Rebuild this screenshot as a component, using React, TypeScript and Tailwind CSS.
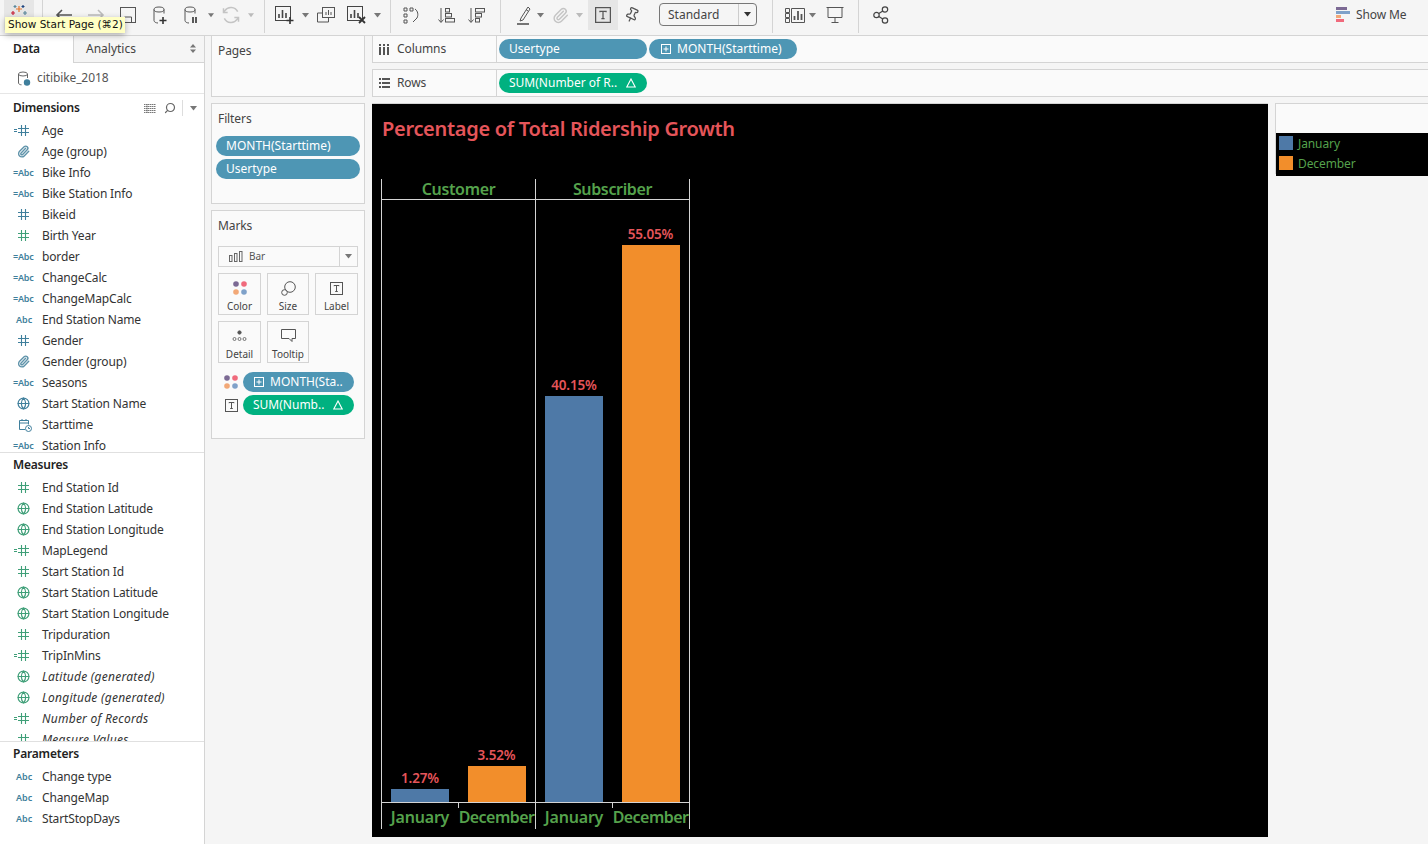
import React from "react";
import { Paperclip, Globe, Search, Pin } from "lucide-react";

const Caret = ({ c = "#777" }: { c?: string }) => (
  <svg width="7" height="5" viewBox="0 0 7 5"><path d="M0 0h7L3.5 4.5z" fill={c} /></svg>
);

const Cyl = () => (
  <g stroke="#555" fill="none" strokeWidth="1">
    <ellipse cx="7" cy="3.5" rx="5" ry="2.5" />
    <path d="M2 3.5v11c0 1.5 2 2.5 4 2.5M12 3.5v4" />
  </g>
);

const Tb = ({ w, children, end, active }: { w: number; children?: React.ReactNode; end?: boolean; active?: boolean }) => (
  <div className={`flex h-[30px] shrink-0 items-center ${end ? "justify-end" : "justify-center"} ${active ? "bg-[#e6e6e6]" : ""}`} style={{ width: w }}>
    {children}
  </div>
);

const Sep = () => <div className="h-[33px] w-px shrink-0 bg-[#d4d4d4]" />;

const Hash = ({ c }: { c: string }) => (
  <svg width="11" height="11" viewBox="0 0 11 11" stroke={c} strokeWidth="1.1" fill="none">
    <path d="M3.5 0v11M7.5 0v11M0 3.5h11M0 7.5h11" />
  </svg>
);

const TypeIcon = ({ t, c }: { t: string; c: string }) => {
  let el: React.ReactNode = null;
  if (t === "#") el = <div className="pl-[18px]"><Hash c={c} /></div>;
  if (t === "=#")
    el = (
      <div className="flex items-center pl-[14px]">
        <span className="mr-px h-[3px] w-[3px] border-y" style={{ borderColor: c }} />
        <Hash c={c} />
      </div>
    );
  if (t === "Abc") el = <span className="pl-4 text-[9px] font-semibold" style={{ color: c }}>Abc</span>;
  if (t === "=Abc") el = <span className="pl-[13px] text-[9px] font-semibold tracking-[-0.2px]" style={{ color: c }}>=Abc</span>;
  if (t === "clip") el = <div className="pl-[17px]"><Paperclip size={13} color="#5f93aa" strokeWidth={2.6} /></div>;
  if (t === "globe") el = <div className="pl-[17px]"><Globe size={13} color={c} strokeWidth={2.2} /></div>;
  if (t === "cal")
    el = (
      <div className="pl-[18px]">
        <svg width="14" height="14" viewBox="0 0 14 14" fill="none" stroke={c} strokeWidth="1">
          <path d="M7 11.5H1.500v-9h9v4M1.500 5h9M4 1v2M8 1v2" />
          <circle cx="10.500" cy="10.500" r="3" fill="#fff" />
          <path d="M10.500 9v1.500h1.500" />
        </svg>
      </div>
    );
  return <div className="flex w-[42px] shrink-0 items-center">{el}</div>;
};

type Row = [string, string, string, boolean?];
const B = "#3f7f9c";
const G = "#3f9f78";

const dims: Row[] = [
  ["=#", B, "Age"], ["clip", B, "Age (group)"], ["=Abc", B, "Bike Info"], ["=Abc", B, "Bike Station Info"],
  ["#", B, "Bikeid"], ["#", G, "Birth Year"], ["=Abc", B, "border"], ["=Abc", B, "ChangeCalc"],
  ["=Abc", B, "ChangeMapCalc"], ["Abc", B, "End Station Name"], ["#", B, "Gender"], ["clip", B, "Gender (group)"],
  ["=Abc", B, "Seasons"], ["globe", B, "Start Station Name"], ["cal", B, "Starttime"], ["=Abc", B, "Station Info"],
];
const meas: Row[] = [
  ["#", G, "End Station Id"], ["globe", G, "End Station Latitude"], ["globe", G, "End Station Longitude"], ["=#", G, "MapLegend"],
  ["#", G, "Start Station Id"], ["globe", G, "Start Station Latitude"], ["globe", G, "Start Station Longitude"], ["#", G, "Tripduration"],
  ["=#", G, "TripInMins"], ["globe", G, "Latitude (generated)", true], ["globe", G, "Longitude (generated)", true],
  ["=#", G, "Number of Records", true], ["#", G, "Measure Values", true],
];
const params: Row[] = [["Abc", B, "Change type"], ["Abc", B, "ChangeMap"], ["Abc", B, "StartStopDays"]];

const FieldRow = ({ r }: { r: Row }) => (
  <div className="flex h-[21px] shrink-0 items-center">
    <TypeIcon t={r[0]} c={r[1]} />
    <span className={`whitespace-nowrap text-[12px] text-[#333] ${r[3] ? "italic tracking-[0.25px]" : "tracking-[-0.15px]"}`}>{r[2]}</span>
  </div>
);

const Pill = ({ label, green, w, plus, delta, pad = "pl-[10px]" }: { label: string; green?: boolean; w: number; plus?: boolean; delta?: boolean; pad?: string }) => (
  <div
    className={`flex h-5 shrink-0 items-center rounded-full text-[12px] text-white ${pad} ${green ? "bg-[#00b180]" : "bg-[#4e96b4]"}`}
    style={{ width: w }}
  >
    {plus ? (
      <svg width="10" height="10" viewBox="0 0 10 10" fill="none" stroke="#fff" strokeWidth="1" className="mr-[6px] shrink-0">
        <rect x="0.5" y="0.5" width="9" height="9" />
        <path d="M5 2.500v5M2.500 5h5" />
      </svg>
    ) : null}
    <span className="whitespace-nowrap">{label}</span>
    {delta ? (
      <svg width="10" height="10" viewBox="0 0 10 10" fill="none" stroke="#fff" strokeWidth="1.1" className="ml-auto mr-[11px] shrink-0">
        <path d="M5 1 9.200 9H.8z" />
      </svg>
    ) : null}
  </div>
);

const MarkCard = ({ label, children }: { label: string; children: React.ReactNode }) => (
  <div className="flex h-[42px] flex-col items-center border border-[#d4d4d4] pt-[5px]">
    <div className="flex h-[18px] items-center">{children}</div>
    <span className="mt-[2px] text-[10px] leading-[14px] text-[#444]">{label}</span>
  </div>
);

const Dots = () => (
  <svg width="14" height="14" viewBox="0 0 14 14" className="shrink-0">
    <circle cx="3" cy="3" r="2.800" fill="#7c6a94" />
    <circle cx="11" cy="3" r="2.800" fill="#f06a7c" />
    <circle cx="3" cy="11" r="2.800" fill="#f2a877" />
    <circle cx="11" cy="11" r="2.800" fill="#7fa1c9" />
  </svg>
);

const TBox = ({ size = 13 }: { size?: number }) => (
  <svg width={size} height={size} viewBox="0 0 13 13" fill="none" stroke="#555" strokeWidth="1">
    <rect x="0.5" y="0.5" width="12" height="12" />
    <path d="M4 4.200V3.500h5v.7M6.500 3.500v6M5.200 9.500h2.600" />
  </svg>
);

const BAR_SCALE = 557 / 55.05;
const panes = [
  { name: "Customer", jan: 1.27, dec: 3.52 },
  { name: "Subscriber", jan: 40.15, dec: 55.05 },
];

const Bar = ({ v, color, w }: { v: number; color: string; w: number }) => (
  <div className="flex flex-col items-center justify-end" style={{ width: w }}>
    <span className="mb-[2px] whitespace-nowrap text-[13.5px] font-semibold leading-[18px] tracking-[-0.15px] text-[#e5555a]">{v.toFixed(2)}%</span>
    <div className="w-[58px]" style={{ height: Math.round(v * BAR_SCALE), backgroundColor: color }} />
  </div>
);

export default function App() {
  return (
    <div className="relative flex h-[844px] w-[1428px] flex-col overflow-hidden bg-[#f5f5f5] font-['Noto_Sans',sans-serif] text-[#333]">
      {/* toolbar */}
      <div className="flex h-[36px] shrink-0 items-start border-b border-[#d4d4d4]">
        <div className="ml-[4px] flex h-[30px] w-[30px] shrink-0 items-start justify-center bg-[#e6e6e6] pt-[4px]">
          <svg width="18" height="18" viewBox="0 0 18 18" strokeWidth="1.2" fill="none">
            <path d="M9 2v6M6 5h6" stroke="#e8762d" />
            <path d="M3 7v4M1 9h4" stroke="#c72037" />
            <path d="M15 7v4M13 9h4" stroke="#5b879b" />
            <path d="M5 1v3M3.500 2.500h3" stroke="#59879b" />
            <path d="M13 1v3M11.500 2.500h3" stroke="#1f447e" />
          </svg>
        </div>
        <div className="w-[8px] shrink-0" />
        <Sep />
        <Tb w={42}>
          <svg width="18" height="14" viewBox="0 0 18 14" fill="none" stroke="#555" strokeWidth="1.6"><path d="M17 7H2M7 2 2 7l5 5" /></svg>
        </Tb>
        <Tb w={22}>
          <svg width="18" height="14" viewBox="0 0 18 14" fill="none" stroke="#bbb" strokeWidth="1.6"><path d="M1 7h15M11 2l5 5-5 5" /></svg>
        </Tb>
        <Tb w={42}>
          <svg width="16" height="16" viewBox="0 0 16 16" fill="none" stroke="#555" strokeWidth="1"><rect x="0.5" y="0.5" width="15" height="15" /><path d="M4.500 15v-5h7v5" /></svg>
        </Tb>
        <Tb w={23}>
          <svg width="17" height="19" viewBox="0 0 17 19"><Cyl /><path d="M11 11v7M7.500 14.500h7" stroke="#333" strokeWidth="1.6" /></svg>
        </Tb>
        <Tb w={36}>
          <svg width="15" height="19" viewBox="0 0 15 19"><Cyl /><path d="M10 11v6M13 11v6" stroke="#333" strokeWidth="1.6" /></svg>
        </Tb>
        <Tb w={6}><Caret /></Tb>
        <Tb w={34}>
          <svg width="20" height="20" viewBox="0 0 24 24" fill="none" stroke="#c4c4c4" strokeWidth="1.800"><path d="M20 8a9 9 0 0 0-15.500-1L3 9M4 16a9 9 0 0 0 15.500 1L21 15M3 4v5h5M21 20v-5h-5" /></svg>
        </Tb>
        <Tb w={6}><Caret c="#bbb" /></Tb>
        <div className="w-[10px] shrink-0" />
        <Sep />
        <Tb w={30} end>
          <svg width="20" height="18" viewBox="0 0 20 18" fill="none" stroke="#444" strokeWidth="1"><rect x="0.5" y="0.5" width="15" height="14" /><path d="M4 12V8M7.500 12V4M11 12V7" strokeWidth="1.600" /><path d="M15 11v7M11.500 14.500h7" stroke="#333" strokeWidth="1.600" /></svg>
        </Tb>
        <Tb w={20}><Caret /></Tb>
        <Tb w={22}>
          <svg width="18" height="16" viewBox="0 0 18 16" fill="none" stroke="#555" strokeWidth="1"><rect x="5.500" y="0.5" width="12" height="10" /><path d="M5 6H.5v9h11v-4M9 8V5M11.500 8V3M14 8V5" /></svg>
        </Tb>
        <Tb w={30} end>
          <svg width="20" height="18" viewBox="0 0 20 18" fill="none" stroke="#444" strokeWidth="1"><rect x="0.5" y="0.5" width="15" height="14" /><path d="M4 12V8M7.500 12V4M11 12V7" strokeWidth="1.600" /><path d="m12 11 6 6M18 11l-6 6" stroke="#333" strokeWidth="1.800" /></svg>
        </Tb>
        <Tb w={20}><Caret /></Tb>
        <div className="w-[3px] shrink-0" />
        <Sep />
        <Tb w={40}>
          <svg width="17" height="17" viewBox="0 0 17 17" fill="none" stroke="#555" strokeWidth="1"><path d="M1 1h3v3H1zM7 1h3v3H7zM1 7h3v3H1zM1 13h3v3H1z" /><path d="M12 2c3 2 3.500 6 2 9l-4 4" /></svg>
        </Tb>
        <Tb w={30}>
          <svg width="17" height="17" viewBox="0 0 17 17" fill="none" stroke="#555" strokeWidth="1"><path d="M3 1v14M.5 12.500 3 15.500l2.500-3" /><rect x="7.500" y="1.500" width="4" height="3.500" /><rect x="7.500" y="6.500" width="6" height="3.500" /><rect x="7.500" y="11.500" width="9" height="3.500" /></svg>
        </Tb>
        <Tb w={30}>
          <svg width="17" height="17" viewBox="0 0 17 17" fill="none" stroke="#555" strokeWidth="1"><path d="M3 1v14M.5 12.500 3 15.500l2.500-3" /><rect x="7.500" y="1.500" width="9" height="3.500" /><rect x="7.500" y="6.500" width="6" height="3.500" /><rect x="7.500" y="11.500" width="4" height="3.500" /></svg>
        </Tb>
        <div className="w-[9px] shrink-0" />
        <Sep />
        <Tb w={30} end>
          <svg width="14" height="19" viewBox="0 0 14 19" fill="none" stroke="#555" strokeWidth="1"><path d="M4 12 3 15l3-1 7-11-2-2zM9 3.500 11 5" /><path d="M0 18h12" strokeWidth="1.600" /></svg>
        </Tb>
        <Tb w={18}><Caret /></Tb>
        <Tb w={22}><Paperclip size={17} color="#c4c4c4" strokeWidth={2} /></Tb>
        <Tb w={17}><Caret c="#bbb" /></Tb>
        <Tb w={30} active><TBox size={16} /></Tb>
        <Tb w={28}><Pin size={16} color="#555" strokeWidth={1.9} className="rotate-[25deg]" /></Tb>
        <div className="ml-[13px] mt-[3px] flex h-[23px] w-[98px] shrink-0 items-center rounded-sm border border-[#777] bg-[#f5f5f5]">
          <span className="flex-1 pl-2 text-[12px] text-[#444]">Standard</span>
          <span className="flex h-full w-[18px] items-center justify-center border-l border-[#ccc]"><Caret c="#333" /></span>
        </div>
        <div className="w-[15px] shrink-0" />
        <Sep />
        <Tb w={32} end>
          <svg width="20" height="15" viewBox="0 0 20 15" fill="none" stroke="#555" strokeWidth="1"><path d="M.5.5h4v4h-4zM.5 5.500h4v4h-4zM.5 10.500h4v4h-4zM6.500.5h13v14h-13z" /><path d="M9.500 12V8M13 12V3M16.500 12V6" strokeWidth="1.800" /></svg>
        </Tb>
        <Tb w={14}><Caret /></Tb>
        <Tb w={32}>
          <svg width="18" height="18" viewBox="0 0 18 18" fill="none" stroke="#555" strokeWidth="1"><path d="M.5 1.500h17M2 1.500v10h14v-10M9 11.500V17M5.500 16.500h7" /></svg>
        </Tb>
        <div className="w-[7px] shrink-0" />
        <Sep />
        <Tb w={44}>
          <svg width="16" height="18" viewBox="0 0 16 18" fill="none" stroke="#444" strokeWidth="1.200"><circle cx="3.500" cy="9" r="2.700" /><circle cx="12" cy="3.500" r="2.700" /><circle cx="12" cy="14.500" r="2.700" /><path d="m5.800 7.500 4-2.600M5.800 10.500l4 2.600" /></svg>
        </Tb>
        <div className="flex-1" />
        <div className="flex h-[30px] w-[92px] shrink-0 items-center">
          <svg width="15" height="16" viewBox="0 0 15 16" className="mr-[5px]">
            <rect y="0" width="11" height="3" fill="#7c6a94" />
            <rect y="4" width="14" height="3" fill="#7fa1c9" />
            <rect y="8" width="5" height="3" fill="#f2a877" />
            <rect y="12" width="8" height="3" fill="#f06a7c" />
          </svg>
          <span className="text-[12px] tracking-[-0.1px] text-[#444]">Show Me</span>
        </div>
      </div>

      <div className="flex min-h-0 flex-1">
        {/* data pane */}
        <div className="flex w-[205px] shrink-0 flex-col border-r border-[#d4d4d4] bg-white">
          <div className="flex h-[27px] shrink-0 bg-white">
            <div className="flex w-[73px] items-center pb-[2px] pl-[13px] text-[12px] font-semibold tracking-[-0.2px] text-[#222]">Data</div>
            <div className="flex flex-1 items-center justify-between border-b border-l border-[#d4d4d4] bg-[#f5f5f5] pb-px pl-3 pr-2 text-[12px] text-[#444]">
              <span>Analytics</span>
              <svg width="6" height="9" viewBox="0 0 6 9" fill="#777"><path d="M3 0 6 3.500H0zM3 9 0 5.500h6z" /></svg>
            </div>
          </div>
          <div className="flex h-[31px] shrink-0 items-center border-b border-[#e6e6e6] pl-[17px]">
            <svg width="14" height="15" viewBox="0 0 14 15" fill="none" stroke="#666" strokeWidth="1" className="mr-[6px]">
              <ellipse cx="6" cy="3" rx="4.500" ry="2" />
              <path d="M1.500 3v9c0 1 1.500 1.800 3 1.800M10.500 3v4" />
              <circle cx="10" cy="11.500" r="3.200" fill="#3f7f9c" stroke="none" />
            </svg>
            <span className="text-[12px] tracking-[-0.1px] text-[#555]">citibike_2018</span>
          </div>
          <div className="flex h-[359px] shrink-0 flex-col overflow-hidden border-b border-[#e0e0e0]">
            <div className="flex h-[26px] shrink-0 items-center pl-[13px] pr-[7px] pt-[2px]">
              <span className="flex-1 text-[12px] font-semibold tracking-[-0.2px] text-[#222]">Dimensions</span>
              <svg width="12" height="9" viewBox="0 0 12 9" stroke="#777" strokeWidth="1" className="mr-[8px]"><path d="M0 .5h12M0 2.500h12M0 4.500h12M0 6.500h12M0 8.500h12M3 0v9" strokeDasharray="1.500 .5" /></svg>
              <Search size={12} color="#666" strokeWidth={2.4} className="mr-[6px] -scale-x-100" />
              <div className="mr-[7px] h-4 w-px bg-[#ddd]" />
              <Caret />
            </div>
            {dims.map((r) => <FieldRow key={r[2]} r={r} />)}
          </div>
          <div className="flex h-[289px] shrink-0 flex-col overflow-hidden border-b border-[#e0e0e0]">
            <div className="flex h-[24px] shrink-0 items-center pl-[13px] text-[12px] font-semibold tracking-[-0.2px] text-[#222]">Measures</div>
            {meas.map((r) => <FieldRow key={r[2]} r={r} />)}
          </div>
          <div className="flex flex-1 flex-col">
            <div className="flex h-[24px] shrink-0 items-center pl-[13px] text-[12px] font-semibold tracking-[-0.2px] text-[#222]">Parameters</div>
            {params.map((r) => <FieldRow key={r[2]} r={r} />)}
          </div>
        </div>

        {/* cards */}
        <div className="ml-[6px] flex w-[154px] shrink-0 flex-col gap-[6px]">
          <div className="h-[61px] shrink-0 border border-t-0 border-[#d4d4d4] bg-[#fafafa] pl-[6px] pt-[6px] text-[12px] tracking-[-0.1px] text-[#444]">Pages</div>
          <div className="flex h-[101px] shrink-0 flex-col border border-[#d4d4d4] bg-[#fafafa] px-[4px]">
            <div className="pl-[2px] pt-[6px] text-[12px] leading-[17px] tracking-[-0.1px] text-[#444]">Filters</div>
            <div className="mt-[9px] flex flex-col gap-[3px]">
              <Pill label="MONTH(Starttime)" w={144} />
              <Pill label="Usertype" w={144} />
            </div>
          </div>
          <div className="flex h-[229px] shrink-0 flex-col border border-[#d4d4d4] bg-[#fafafa] px-[6px]">
            <div className="pt-[6px] text-[12px] leading-[17px] tracking-[-0.1px] text-[#444]">Marks</div>
            <div className="mt-[12px] flex h-[21px] w-[140px] items-center border border-[#d4d4d4]">
              <svg width="14" height="11" viewBox="0 0 14 11" fill="none" stroke="#666" strokeWidth="1" className="ml-[10px] mr-[6px]"><rect x=".5" y="4.500" width="2.500" height="6" /><rect x="5.500" y="2.500" width="2.500" height="8" /><rect x="10.500" y=".5" width="2.500" height="10" /></svg>
              <span className="flex-1 text-[10px] text-[#555]">Bar</span>
              <span className="flex h-full w-[18px] items-center justify-center border-l border-[#d4d4d4]"><Caret /></span>
            </div>
            <div className="mt-[6px] grid w-[140px] grid-cols-[43px_42px_43px] gap-x-[6px] gap-y-[6px]">
              <MarkCard label="Color"><Dots /></MarkCard>
              <MarkCard label="Size">
                <svg width="15" height="15" viewBox="0 0 15 15" fill="none" stroke="#555" strokeWidth="1"><circle cx="9" cy="6" r="5.300" /><circle cx="3.500" cy="11.500" r="2.800" fill="#fafafa" /></svg>
              </MarkCard>
              <MarkCard label="Label"><TBox /></MarkCard>
              <MarkCard label="Detail">
                <svg width="15" height="12" viewBox="0 0 15 12" fill="none" stroke="#555" strokeWidth=".8"><circle cx="7.500" cy="2.500" r="1.700" fill="#555" /><circle cx="2.500" cy="9" r="1.500" /><circle cx="7.500" cy="9" r="1.500" /><circle cx="12.500" cy="9" r="1.500" /></svg>
              </MarkCard>
              <MarkCard label="Tooltip">
                <svg width="15" height="14" viewBox="0 0 15 14" fill="none" stroke="#555" strokeWidth="1"><path d="M.5.5h14v9H11v3l-3-3H.5z" /></svg>
              </MarkCard>
            </div>
            <div className="mt-[9px] flex items-center pl-[6px]"><Dots /><div className="ml-[5px]"><Pill label="MONTH(Sta.." w={111} plus pad="pl-[11px]" /></div></div>
            <div className="mt-[3px] flex items-center pl-[6px]"><div className="flex w-[14px] justify-center"><TBox /></div><div className="ml-[5px]"><Pill label="SUM(Numb.." w={111} green delta /></div></div>
          </div>
        </div>

        {/* main */}
        <div className="ml-[7px] flex min-w-0 flex-1 flex-col">
          <div className="flex h-[27px] shrink-0 items-center border-b border-l border-[#d4d4d4] bg-[#fafafa]">
            <div className="flex h-full w-[124px] shrink-0 items-center border-r border-[#d4d4d4] pl-[6px] text-[12px] tracking-[-0.1px] text-[#444]">
              <svg width="10" height="11" viewBox="0 0 10 11" fill="#555" className="mr-[8px]"><rect x="0" y="3" width="2" height="8" /><rect x="4" y="3" width="2" height="8" /><rect x="8" y="3" width="2" height="8" /><rect x="0" y="0" width="2" height="2" /><rect x="4" y="0" width="2" height="2" /><rect x="8" y="0" width="2" height="2" /></svg>
              Columns
            </div>
            <div className="ml-[2px] flex gap-[2px]">
              <Pill label="Usertype" w={148} />
              <Pill label="MONTH(Starttime)" w={148} plus pad="pl-3" />
            </div>
          </div>
          <div className="mt-[6px] flex h-[28px] shrink-0 items-center border-y border-l border-[#d4d4d4] bg-[#fafafa]">
            <div className="flex h-full w-[124px] shrink-0 items-center border-r border-[#d4d4d4] pl-[6px] text-[12px] tracking-[-0.1px] text-[#444]">
              <svg width="11" height="10" viewBox="0 0 11 10" fill="#555" className="mr-[7px]"><rect x="0" y="0" width="2" height="2" /><rect x="3" y="0" width="8" height="2" /><rect x="0" y="4" width="2" height="2" /><rect x="3" y="4" width="8" height="2" /><rect x="0" y="8" width="2" height="2" /><rect x="3" y="8" width="8" height="2" /></svg>
              Rows
            </div>
            <div className="ml-[2px]"><Pill label="SUM(Number of R.." w={148} green delta /></div>
          </div>

          <div className="mt-[6px] flex min-h-0 gap-[7px]">
            {/* view */}
            <div className="flex h-[734px] w-[896px] shrink-0 flex-col border-t border-[#d4d4d4] bg-black pl-[9px]">
              <div className="ml-px mt-[11px] h-[64px] whitespace-nowrap text-[20px] font-semibold leading-[28px] tracking-[-0.3px] text-[#e5555a]">Percentage of Total Ridership Growth</div>
              <div className="flex w-[309px] border-r border-[#d4d4d4]">
                {panes.map((p) => (
                  <div key={p.name} className="flex w-[154px] flex-col border-l border-[#d4d4d4]">
                    <div className="flex h-[21px] items-center justify-center border-b border-[#d4d4d4] text-[16px] font-semibold tracking-[-0.35px] text-[#55a24c]">{p.name}</div>
                    <div className="flex h-[603px] items-end border-b border-[#d4d4d4]">
                      <Bar v={p.jan} color="#4e79a7" w={76} />
                      <Bar v={p.dec} color="#f28e2b" w={77} />
                    </div>
                    <div className="flex h-[26px]">
                      <div className="flex w-[76px] items-center justify-center pt-px text-[16px] font-semibold tracking-[-0.2px] text-[#55a24c]">January</div>
                      <div className="flex w-[77px] flex-col items-center whitespace-nowrap">
                        <div className="h-[5px] w-px self-start bg-[#d4d4d4]" />
                        <span className="mt-[-3px] text-[16px] font-semibold leading-[24px] tracking-[-0.55px] text-[#55a24c]">December</span>
                      </div>
                    </div>
                  </div>
                ))}
              </div>
            </div>
            {/* legend */}
            <div className="flex h-[71px] min-w-0 flex-1 flex-col border border-r-0 border-[#d4d4d4] bg-[#fafafa]">
              <div className="h-[29px] shrink-0" />
              <div className="flex flex-1 flex-col bg-black pl-[3px] pt-[3px]">
                <div className="flex h-5 items-start gap-[5px]"><span className="h-[14px] w-[14px] bg-[#4e79a7]" /><span className="text-[12px] leading-[16px] tracking-[-0.1px] text-[#55a24c]">January</span></div>
                <div className="flex h-5 items-start gap-[5px]"><span className="h-[14px] w-[14px] bg-[#f28e2b]" /><span className="text-[12px] leading-[16px] tracking-[-0.1px] text-[#55a24c]">December</span></div>
              </div>
            </div>
          </div>
        </div>
      </div>

      {/* tooltip */}
      <div className="absolute left-[5px] top-[17px] flex h-[16px] w-[120px] items-center whitespace-nowrap bg-[#ffffc4] pl-[3px] font-['DejaVu_Sans',sans-serif] text-[10.5px] text-[#111] shadow-[0_2px_6px_rgba(0,0,0,0.3)]">
        Show Start Page (⌘2)
      </div>
    </div>
  );
}
